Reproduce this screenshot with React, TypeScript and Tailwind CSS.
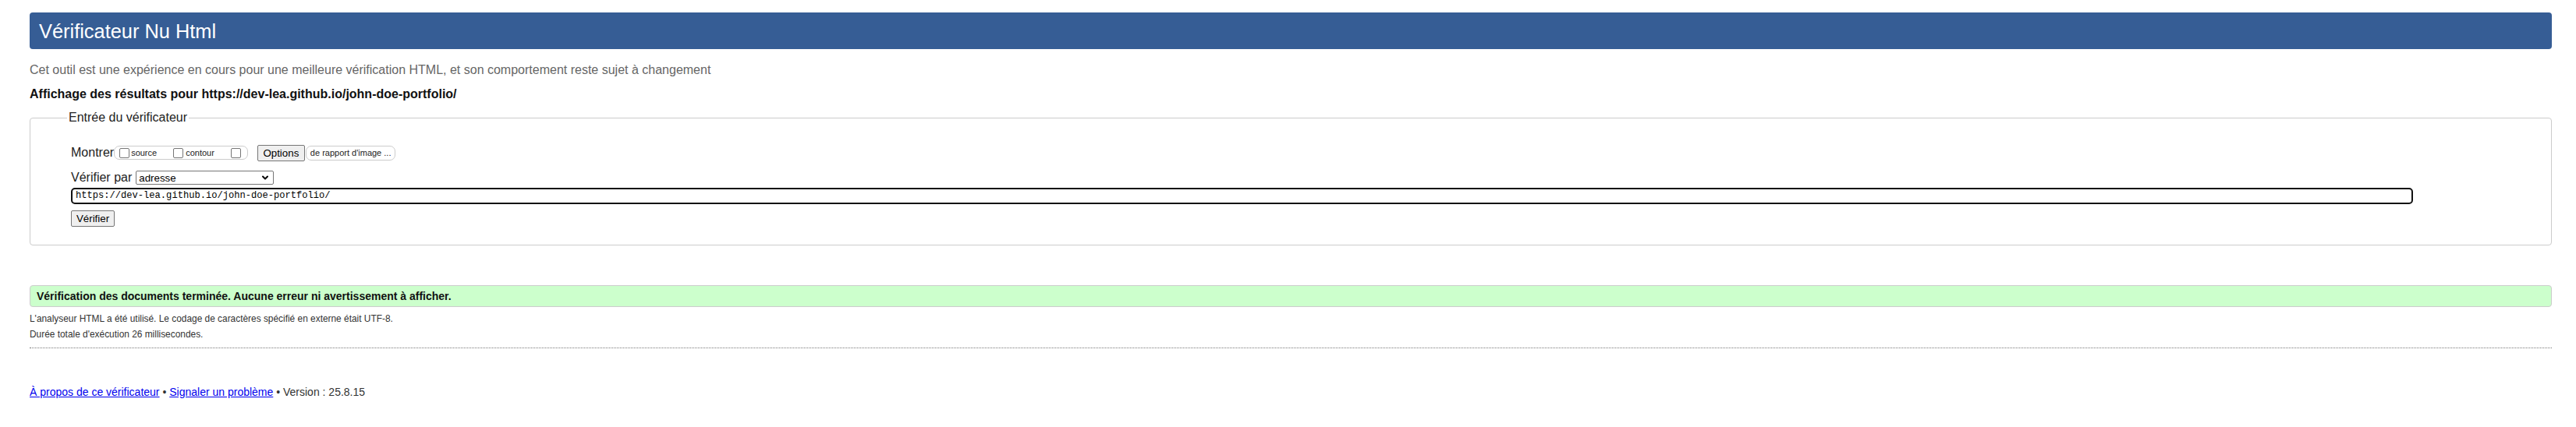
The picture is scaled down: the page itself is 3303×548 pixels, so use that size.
import { ChevronDown } from 'lucide-react';

function Checkbox() {
  return (
    <input
      type="checkbox"
      className="m-0 h-[13px] w-[13px] shrink-0 appearance-none rounded-[2px] border border-[#767676] bg-white"
    />
  );
}

function PillGroup() {
  return (
    <div className="flex h-[18px] items-center rounded-[7px] border border-[#cccccc] pl-[6px] pr-[8px]">
      <Checkbox />
      <span className="ml-[2px] text-[11px] leading-[13px] text-[#222]">source</span>
      <span className="ml-[21px] flex items-center">
        <Checkbox />
        <span className="ml-[3px] text-[11px] leading-[13px] text-[#222]">contour</span>
      </span>
      <span className="ml-[21px] flex items-center">
        <Checkbox />
      </span>
    </div>
  );
}

function GrayButton({ label, className }: { label: string; className?: string }) {
  return (
    <button
      type="button"
      className={
        'flex h-[21px] items-center justify-center rounded-[2px] border border-[#767676] bg-[#efefef] text-[13.33px] leading-[15px] text-black ' +
        (className ?? '')
      }
    >
      {label}
    </button>
  );
}

function CheckerForm() {
  return (
    <fieldset className="mt-[12px] rounded-[4px] border border-[#cccccc] pb-[23px] pl-[52px] pr-[52px] pt-[26px]">
      <legend className="ml-[-5px] px-[2px] text-[16px] leading-[18px] text-[#222]">
        Entrée du vérificateur
      </legend>

      <div className="flex h-[20px] items-center">
        <span className="text-[16px] leading-[20px] text-[#222]">Montrer</span>
        <PillGroup />
        <GrayButton label="Options" className="ml-[12px] h-[20px] w-[61px]" />
        <div className="ml-px flex h-[19px] items-center rounded-[7px] border border-[#cccccc] px-[5px] text-[11px] leading-[13px] text-[#222]">
          de rapport d'image ...
        </div>
      </div>

      <div className="mt-[13px] flex h-[18px] items-center">
        <span className="text-[16px] leading-[18px] text-[#222]">Vérifier par</span>
        <div className="ml-[5px] flex h-[18px] w-[177px] items-center justify-between rounded-[2px] border border-[#767676] bg-white pl-[3px] pr-[4px] text-[13.33px] leading-[15px] text-black">
          <span>adresse</span>
          <ChevronDown size={12} strokeWidth={4} className="text-black" />
        </div>
      </div>

      <div className="mt-[4px] flex h-[21px] w-[3003px] items-center rounded-[5px] border-2 border-[#111] bg-white pl-[4px] font-['Liberation_Mono',monospace] text-[12.1px] text-black">
        https://dev-lea.github.io/john-doe-portfolio/
      </div>

      <GrayButton label="Vérifier" className="mt-[8px] w-[56px]" />
    </fieldset>
  );
}

export default function App() {
  return (
    <div className="min-h-[548px] bg-white pl-[38px] pr-[31px] pt-[16px] font-['Liberation_Sans',Arial,sans-serif] text-[#222]">
      <h1 className="flex h-[47px] items-center rounded-[4px] bg-[#365d95] pl-[12px] text-[25.4px] font-normal leading-[30px] text-white">
        Vérificateur Nu Html
      </h1>

      <p className="mt-[18px] text-[16px] leading-[18px] text-[#666]">
        Cet outil est une expérience en cours pour une meilleure vérification HTML, et son comportement reste sujet à changement
      </p>

      <p className="mt-[13px] text-[16px] font-bold leading-[18px] text-[#111]">
        Affichage des résultats pour https://dev-lea.github.io/john-doe-portfolio/
      </p>

      <CheckerForm />

      <div className="mt-[51px] flex h-[28px] items-center rounded-[4px] border border-[#cccccc] bg-[#ccffcc] pl-[8px] text-[14px] font-bold leading-[16px] text-[#111]">
        Vérification des documents terminée. Aucune erreur ni avertissement à afficher.
      </div>

      <div className="mt-[5px] text-[11.9px] leading-[20px] text-[#333]">
        <p>L'analyseur HTML a été utilisé. Le codage de caractères spécifié en externe était UTF-8.</p>
        <p>Durée totale d'exécution 26 millisecondes.</p>
      </div>

      <hr className="mt-[7px] border-0 border-t border-dotted border-[#777]" />

      <p className="mt-[48px] text-[14px] leading-[16px] text-[#333]">
        <a href="#" className="text-[#0000ee] underline">
          À propos de ce vérificateur
        </a>{' '}
        •{' '}
        <a href="#" className="text-[#0000ee] underline">
          Signaler un problème
        </a>{' '}
        • Version : 25.8.15
      </p>
    </div>
  );
}
